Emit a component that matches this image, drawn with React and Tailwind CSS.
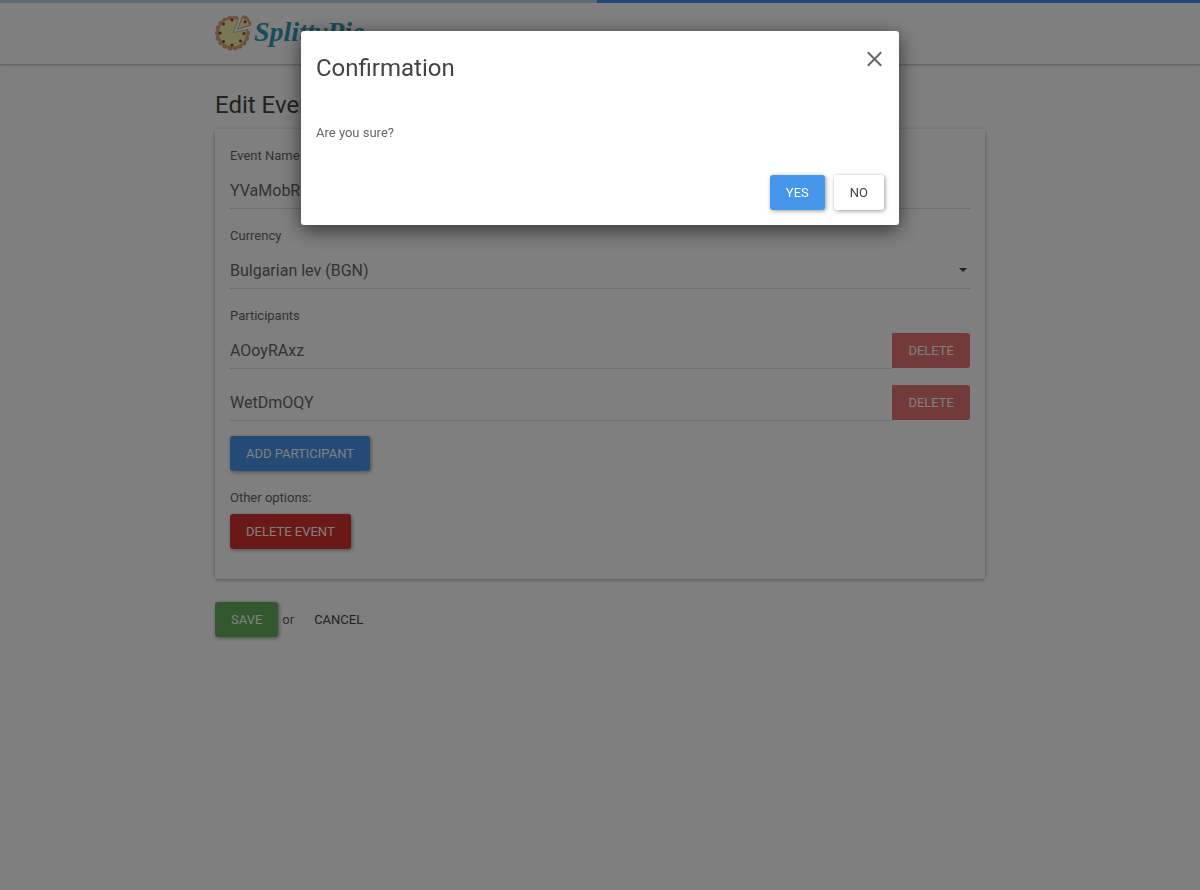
import React from "react";

const buttonBase =
  "h-[35px] rounded-[3px] px-4 text-[13px] leading-[23px] uppercase";
const raised = "shadow-[1px_1px_4px_rgba(0,0,0,0.4)]";
const field =
  "h-[37px] w-full min-w-0 appearance-none border-b border-[#dddddd] bg-transparent text-base text-[#666666] outline-none";

const cherries = [
  [17, 7],
  [8.5, 11],
  [5, 20],
  [8.5, 28.5],
  [17, 32],
  [25.5, 28],
  [29, 20.5],
];

const crustBumps = Array.from({ length: 18 }, (_, i) => {
  const angle = (i * Math.PI * 2) / 18;
  return [17.5 + Math.cos(angle) * 15, 20 + Math.sin(angle) * 15];
}).filter(([x, y]) => !(x > 21 && y < 18));

function PieLogo() {
  return (
    <svg width="37" height="38" viewBox="0 0 37 38" aria-hidden="true">
      <g fill="#d3a877">
        {crustBumps.map(([x, y], i) => (
          <circle key={i} cx={x} cy={y} r="2.6" />
        ))}
        <path d="M18.5 19.5 L24 5 A16 16 0 1 0 33.2 16.4 Z" />
      </g>
      <path
        d="M18.5 19.5 L23 7 A13.8 13.8 0 1 0 31.2 17 Z"
        fill="#f2efa8"
      />
      <path d="M24.4 4 L18.5 19.5 L34.5 16 Z" fill="#ffffff" />
      <path
        d="M21.6 17 L27 3.4 Q28.2 1.2 30 2.8 Q32.2 2.2 32.8 4.8 Q35 5.4 34.6 7.8 Q37.2 9.4 36 12.6 Z"
        fill="#d3a877"
      />
      <path d="M22.8 15.6 L28.2 4.8 Q32.4 7 34 11.8 Z" fill="#f2efa8" />
      <path
        d="M23.6 5.5 L18.5 19.5 L33 16.4"
        fill="none"
        stroke="#a9a7a0"
        strokeWidth="0.7"
      />
      {cherries.map(([x, y], i) => (
        <circle key={i} cx={x} cy={y} r="1.5" fill="#c4242c" />
      ))}
      <circle cx="30" cy="8.7" r="1.5" fill="#c4242c" />
    </svg>
  );
}

function Participant({ id, name }) {
  return (
    <div className="flex items-center">
      <input
        id={id}
        aria-label="Participant name"
        defaultValue={name}
        className={field}
      />
      <button
        type="button"
        disabled
        className="h-[35px] shrink-0 rounded-r-[3px] bg-[#e67474] px-4 text-[13px] leading-[23px] text-white uppercase"
      >
        Delete
      </button>
    </div>
  );
}

function EventForm() {
  return (
    <form>
      <div className="flex flex-col gap-[15px] rounded-[3px] bg-white px-[15px] pt-[15px] pb-[30px] shadow-[0_1px_4px_rgba(0,0,0,0.3)]">
        <div className="flex flex-col gap-1">
          <label htmlFor="event-name">Event Name</label>
          <input id="event-name" defaultValue="YVaMobR" className={field} />
        </div>
        <div className="flex flex-col gap-1">
          <label htmlFor="currency">Currency</label>
          <div className="relative">
            <select
              id="currency"
              defaultValue="BGN"
              className={`${field} pt-[2px]`}
            >
              <option value="BGN">Bulgarian lev (BGN)</option>
            </select>
            <svg
              className="pointer-events-none absolute top-4 right-[3px]"
              width="8"
              height="4"
              viewBox="0 0 8 4"
              aria-hidden="true"
            >
              <path d="M0 0H8L4 4Z" fill="#444444" />
            </svg>
          </div>
        </div>
        <div className="flex flex-col gap-1">
          <label htmlFor="participant-1">Participants</label>
          <div className="flex flex-col gap-[15px]">
            <Participant id="participant-1" name="AOoyRAxz" />
            <Participant id="participant-2" name="WetDmOQY" />
          </div>
        </div>
        <button
          type="button"
          className={`${buttonBase} ${raised} self-start bg-[#4696ec] text-white`}
        >
          Add participant
        </button>
        <div className="flex flex-col items-start gap-1">
          <p>Other options:</p>
          <button
            type="button"
            className={`${buttonBase} ${raised} bg-[#d6322d] text-white`}
          >
            Delete event
          </button>
        </div>
      </div>
      <div className="mt-[23px] flex items-center gap-1">
        <button
          type="submit"
          className={`${buttonBase} ${raised} bg-[#67b15f] text-white`}
        >
          Save
        </button>
        <span>or</span>
        <button type="button" className={`${buttonBase} text-[#444444]`}>
          Cancel
        </button>
      </div>
    </form>
  );
}

function ConfirmationDialog() {
  return (
    <div className="fixed inset-0 overflow-y-auto bg-black/50">
      <div
        role="dialog"
        aria-modal="true"
        aria-labelledby="dialog-title"
        className="mx-auto mt-[31px] max-w-[598px] rounded-[3px] bg-white shadow-[0_5px_20px_rgba(0,0,0,0.6)]"
      >
        <div className="flex items-start justify-between p-[15px]">
          <h4
            id="dialog-title"
            className="text-2xl leading-[45px] text-[#444444]"
          >
            Confirmation
          </h4>
          <button type="button" aria-label="Close" className="p-[2px]">
            <svg
              width="15"
              height="24"
              viewBox="0 0 15 24"
              fill="none"
              stroke="#666666"
              strokeWidth="2"
              aria-hidden="true"
            >
              <path d="M0.8 4.3L14.2 17.7M14.2 4.3L0.8 17.7" />
            </svg>
          </button>
        </div>
        <div className="p-[15px]">Are you sure?</div>
        <div className="flex justify-end gap-[9px] p-[15px]">
          <button
            type="button"
            className={`${buttonBase} ${raised} bg-[#4696ec] text-white`}
          >
            Yes
          </button>
          <button
            type="button"
            className={`${buttonBase} ${raised} bg-white text-[#444444]`}
          >
            No
          </button>
        </div>
      </div>
    </div>
  );
}

export default function App() {
  return (
    <div className="min-h-screen bg-white font-['Roboto',sans-serif] text-[13px] leading-6 text-[#666666]">
      <div className="flex h-[3px]">
        <div className="w-[49.75%] bg-[#bad6f2]" />
        <div className="flex-1 bg-[#4689f0]" />
      </div>
      <header className="shadow-[0_1px_2px_rgba(0,0,0,0.3)]">
        <div className="mx-auto flex h-[61px] max-w-[770px] items-center pb-1">
          <a href="#" className="flex items-center gap-[2px]">
            <PieLogo />
            <span className="font-['Liberation_Serif',serif] text-[28px] leading-8 font-bold text-[#3398b5] italic">
              SplittyPie
            </span>
          </a>
        </div>
      </header>
      <main className="mx-auto max-w-[770px] pt-[26px]">
        <h1 className="mb-[9px] text-2xl leading-[30px] text-[#444444]">
          Edit Event
        </h1>
        <EventForm />
      </main>
      <ConfirmationDialog />
    </div>
  );
}
